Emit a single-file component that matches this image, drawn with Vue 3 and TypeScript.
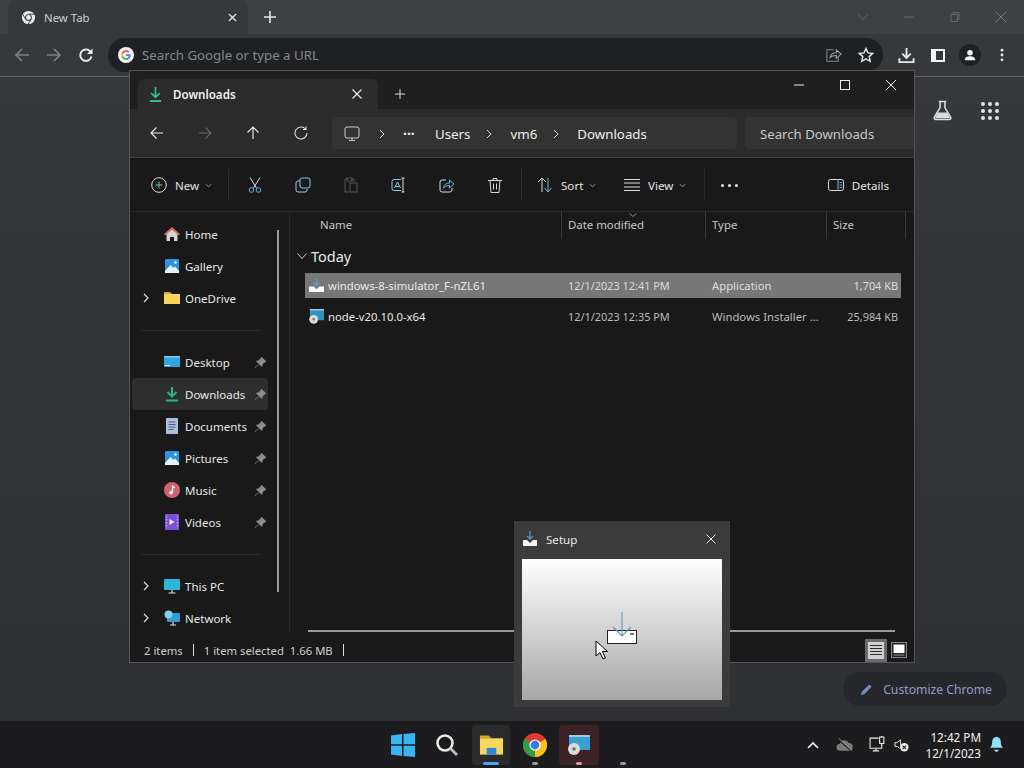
<script setup lang="ts">
const toolIcons = ['cut', 'copy', 'paste', 'rename', 'share', 'delete']

const navTop = [
  { name: 'Home', icon: 'home' },
  { name: 'Gallery', icon: 'gallery' },
  { name: 'OneDrive', icon: 'folder', arrow: true },
]
const navPinned = [
  { name: 'Desktop', icon: 'desktop' },
  { name: 'Downloads', icon: 'download', active: true },
  { name: 'Documents', icon: 'documents' },
  { name: 'Pictures', icon: 'gallery' },
  { name: 'Music', icon: 'music' },
  { name: 'Videos', icon: 'videos' },
]
const navBottom = [
  { name: 'This PC', icon: 'pc', arrow: true },
  { name: 'Network', icon: 'network', arrow: true },
]

const columns = [
  { name: 'Name', width: 257 },
  { name: 'Date modified', width: 144 },
  { name: 'Type', width: 121 },
  { name: 'Size', width: 79 },
]

const files = [
  { name: 'windows-8-simulator_F-nZL61', date: '12/1/2023 12:41 PM', type: 'Application', size: '1,704 KB', icon: 'setup', selected: true },
  { name: 'node-v20.10.0-x64', date: '12/1/2023 12:35 PM', type: 'Windows Installer ...', size: '25,984 KB', icon: 'msi', selected: false },
]
</script>

<template>
  <div class="screen">
    <div class="tabstrip">
      <div class="ctab">
        <svg class="cfav" viewBox="0 0 16 16">
          <circle cx="8" cy="8" r="7" fill="#e8eaed" />
          <circle cx="8" cy="8" r="3.6" fill="#3a3c3f" />
          <circle cx="8" cy="8" r="2.6" fill="#e8eaed" />
          <path d="M8 4.4h6.4M5 10l-3-5.5M10.8 10.2 7.6 15" stroke="#3a3c3f" stroke-width="1" fill="none" />
        </svg>
        <span class="ctab-title">New Tab</span>
        <svg class="ctab-x" viewBox="0 0 10 10"><path d="M1 1l8 8M9 1l-8 8" stroke="#dfe1e5" stroke-width="1.5" /></svg>
      </div>
      <svg class="cnew" viewBox="0 0 12 12"><path d="M6 0v12M0 6h12" stroke="#e3e5e8" stroke-width="1.6" /></svg>
      <div class="wctl">
        <svg viewBox="0 0 14 14" class="wc-chev"><path d="M2 4l5 6 5-6" stroke="#5f6366" fill="none" stroke-width="1" /></svg>
        <svg viewBox="0 0 14 14"><path d="M2 7h10" stroke="#65686b" stroke-width="1" /></svg>
        <svg viewBox="0 0 14 14"><path d="M3 4.5h6.5v7H3zM5 4.5V2.5h6v7H9.500" stroke="#65686b" fill="none" /></svg>
        <svg viewBox="0 0 14 14"><path d="M1.500 1.500l11 11M12.500 1.500l-11 11" stroke="#75787b" /></svg>
      </div>
    </div>

    <div class="ctoolbar">
      <svg class="cbtn" viewBox="0 0 16 16"><path d="M15 8H2M8 2 2 8l6 6" stroke="#7e8184" stroke-width="1.7" fill="none" /></svg>
      <svg class="cbtn" viewBox="0 0 16 16"><path d="M1 8h13M8 2l6 6-6 6" stroke="#7e8184" stroke-width="1.7" fill="none" /></svg>
      <svg class="cbtn" viewBox="0 0 16 16"><path d="M13.500 9.500a5.700 5.700 0 1 1-1.300-5.200" stroke="#eceef0" stroke-width="1.900" fill="none" /><path d="M14.500 1.500v5.400H9.100z" fill="#eceef0" /></svg>
      <div class="omnibox">
        <svg class="gicon" viewBox="0 0 16 16">
          <circle cx="8" cy="8" r="8" fill="#f3f3f3" />
          <path d="M8 3.200a4.800 4.800 0 0 1 3.300 1.300l-1.200 1.200A3.100 3.100 0 0 0 5 7l-1.400-1.100A4.800 4.800 0 0 1 8 3.200z" fill="#ea4335" />
          <path d="M3.600 5.900 5 7a3 3 0 0 0 0 2l-1.400 1.100a4.800 4.800 0 0 1 0-4.200z" fill="#fbbc05" />
          <path d="M3.600 10.100 5 9a3.100 3.100 0 0 0 4.800 1.600l1.300 1.100A4.800 4.800 0 0 1 3.600 10.100z" fill="#34a853" />
          <path d="M8 7.200h4.700a4.800 4.800 0 0 1-1.600 4.500L9.800 10.600c.5-.4.800-.8.900-1.500H8z" fill="#4285f4" />
        </svg>
        <span class="omni-text">Search Google or type a URL</span>
        <svg class="omni-share" viewBox="0 0 18 18"><path d="M9 3H2v12h12v-4" stroke="#85888b" fill="none" stroke-width="1.100" /><path d="M5.500 11c.5-3 3-5 6.500-5V3l5 4.500L12 12V9c-3 0-5 .5-6.500 2z" stroke="#a4a7aa" fill="none" stroke-width="1.100" /></svg>
        <svg class="omni-star" viewBox="0 0 16 16"><path d="M8 1.500l2 4.400 4.700.5-3.500 3.200 1 4.700L8 11.900l-4.200 2.400 1-4.700L1.300 6.400 6 5.900z" stroke="#dcdee1" stroke-width="1.500" fill="none" /></svg>
      </div>
      <div class="ctools">
        <svg class="dl" viewBox="0 0 18 18"><path d="M9 1v10M4.500 7 9 11.500 13.500 7" stroke="#e8eaed" stroke-width="2" fill="none" /><path d="M1.500 12v4h15v-4" stroke="#e8eaed" stroke-width="2" fill="none" /></svg>
        <div class="sidep"><i></i></div>
        <div class="avatar">
          <svg viewBox="0 0 16 16"><circle cx="8" cy="5.500" r="3.200" fill="#f1f3f4" /><path d="M2 14c0-3.500 3-4.500 6-4.500s6 1 6 4.500z" fill="#f1f3f4" /></svg>
        </div>
        <svg class="kebab" viewBox="0 0 4 16"><circle cx="2" cy="2.500" r="1.600" fill="#e8eaed" /><circle cx="2" cy="8" r="1.600" fill="#e8eaed" /><circle cx="2" cy="13.500" r="1.600" fill="#e8eaed" /></svg>
      </div>
    </div>

    <div class="ntp">
      <div class="ntp-top">
        <svg class="flask" viewBox="0 0 22 22"><path d="M7 1.500h8M8.500 1.500v6.500L2.500 18c-.8 1.500.2 2.500 1.500 2.500h14c1.300 0 2.300-1 1.500-2.500l-6-10V1.500" stroke="#dadce0" stroke-width="1.600" fill="none" /><path d="M6 13h10l3 6H3z" fill="#dadce0" /></svg>
        <div class="apps"><i v-for="n in 9" :key="n"></i></div>
      </div>
      <div class="customize">
        <svg viewBox="0 0 14 14"><path d="M1 13l1-3.500L10 1.500 12.500 4l-8 8z" fill="#8ab4f8" opacity=".75" /></svg>
        <span>Customize Chrome</span>
      </div>
    </div>

    <div class="taskbar">
      <div class="task-center">
        <div class="task-cell">
          <svg viewBox="0 0 24 24" class="win"><path d="M0 2.500 11 1v10.300H0zM12.500 1 24 0v11.300H12.500zM0 12.700h11V23L0 21.500zM12.500 12.700H24V24l-11.500-1z" fill="#38b6f4" /></svg>
        </div>
        <div class="task-cell">
          <svg viewBox="0 0 24 24" class="win"><circle cx="10" cy="10" r="7.500" stroke="#e8e8e8" stroke-width="2.600" fill="none" /><path d="M15.500 15.500 22 22" stroke="#b8b8b8" stroke-width="3" /></svg>
        </div>
        <div class="task-cell lit">
          <svg viewBox="0 0 26 24" class="win folder"><path d="M1 2h9l3 3H1z" fill="#d9a72a" /><path d="M1 5h24v17H1z" fill="#fad65e" /><path d="M8 15h10v7H8z" fill="#2b88d8" /></svg>
          <b class="pip wide"></b>
        </div>
        <div class="task-cell">
          <svg viewBox="0 0 24 24" class="win">
            <circle cx="12" cy="12" r="12" fill="#dd3a2e" />
            <path d="M12 12 22.400 6A12 12 0 0 1 12 24z" fill="#f9c31c" />
            <path d="M12 12 12 24A12 12 0 0 1 1.600 6z" fill="#2f9e49" />
            <circle cx="12" cy="12" r="5.600" fill="#fff" /><circle cx="12" cy="12" r="4.400" fill="#3b78e7" />
          </svg>
          <b class="pip"></b>
        </div>
        <div class="task-cell red">
          <svg viewBox="0 0 24 22" class="win"><rect x="2" y="1" width="21" height="15" fill="#3aa0d0" /><rect x="2" y="1" width="21" height="2" fill="#9ccbe2" /><circle cx="7" cy="15" r="6" fill="#d9dcdf" /><circle cx="7" cy="15" r="1.800" fill="#6d7175" /></svg>
          <b class="pip rose"></b>
        </div>
        <div class="task-cell"><b class="pip"></b></div>
      </div>
      <div class="tray">
        <svg class="t-chev" viewBox="0 0 12 8"><path d="M1 7l5-5 5 5" stroke="#f0f0f0" stroke-width="1.600" fill="none" /></svg>
        <svg class="t-cloud" viewBox="0 0 18 14"><path d="M4 13a3.500 3.500 0 0 1 0-7 5 5 0 0 1 9.500-1 4 4 0 0 1 .5 8z" fill="#7c7c7c" /><path d="M2 1l14 12" stroke="#222" stroke-width="1.500" /><path d="M3 0l14 13" stroke="#9a9a9a" /></svg>
        <svg class="t-net" viewBox="0 0 16 16"><path d="M9 2H1v9.500h11V8M3.500 14h6M6.500 11.500V14" stroke="#f0f0f0" fill="none" /><rect x="10" y="1" width="4" height="6" stroke="#f0f0f0" fill="none" /><path d="M12 0v1M12 7v2" stroke="#f0f0f0" /></svg>
        <svg class="t-vol" viewBox="0 0 16 16"><path d="M1 6h2.500L7 3v6" stroke="#f0f0f0" fill="none" /><path d="M1 6v4h2.500L6 12" stroke="#f0f0f0" fill="none" /><circle cx="11" cy="11" r="4.500" fill="#f0f0f0" /><path d="M9.200 9.200l3.600 3.600M12.800 9.200l-3.600 3.600" stroke="#222" stroke-width="1.200" /></svg>
        <div class="clock"><span>12:42 PM</span><span>12/1/2023</span></div>
        <svg class="t-bell" viewBox="0 0 16 18"><path d="M8 1c3.200 0 4.600 2.500 4.600 5.500 0 3 1 4.500 2.400 6H1c1.400-1.500 2.400-3 2.400-6C3.400 3.500 4.800 1 8 1z" fill="#8fe0fa" /><path d="M5.500 14.500h5C10 16 9 16.700 8 16.700S6 16 5.500 14.500z" fill="#8fe0fa" /></svg>
      </div>
    </div>

    <section class="explorer">
      <header class="ex-title">
        <div class="ex-tab">
          <svg class="ex-tab-ic" viewBox="0 0 16 18"><path d="M8 1v11M3.500 7.500 8 12l4.500-4.500" stroke="#2ec4a0" stroke-width="1.700" fill="none" /><path d="M2 16h12" stroke="#2ec4a0" stroke-width="2" /></svg>
          <span>Downloads</span>
          <svg class="ex-tab-x" viewBox="0 0 10 10"><path d="M.5.500l9 9M9.500.500l-9 9" stroke="#f0f0f0" stroke-width="1.100" /></svg>
        </div>
        <svg class="ex-plus" viewBox="0 0 10 10"><path d="M5 0v10M0 5h10" stroke="#ddd" /></svg>
        <div class="ex-ctl">
          <span><svg viewBox="0 0 10 10"><path d="M0 5h10" stroke="#f0f0f0" /></svg></span>
          <span><svg viewBox="0 0 10 10"><rect x=".5" y=".5" width="9" height="9" stroke="#f0f0f0" fill="none" /></svg></span>
          <span><svg viewBox="0 0 10 10"><path d="M0 0l10 10M10 0 0 10" stroke="#f0f0f0" /></svg></span>
        </div>
      </header>

      <div class="ex-nav">
        <span class="nbtn"><svg viewBox="0 0 14 14"><path d="M13 7H1M6.500 1.500 1 7l5.500 5.500" stroke="#eee" fill="none" stroke-width="1.100" /></svg></span>
        <span class="nbtn"><svg viewBox="0 0 14 14"><path d="M1 7h12M7.500 1.500 13 7l-5.500 5.500" stroke="#666" fill="none" stroke-width="1.100" /></svg></span>
        <span class="nbtn"><svg viewBox="0 0 14 14"><path d="M7 13V1M1.500 6.500 7 1l5.500 5.500" stroke="#eee" fill="none" stroke-width="1.100" /></svg></span>
        <span class="nbtn"><svg viewBox="0 0 14 14"><path d="M11.500 3a6 6 0 1 0 1.500 4M12 .5V3.500H9" stroke="#ddd" fill="none" stroke-width="1.100" /></svg></span>
        <div class="crumbs">
          <svg class="crumb-pc" viewBox="0 0 16 16"><rect x="1" y="1" width="14" height="11" rx="2" stroke="#ccc" fill="none" /><path d="M5 14.500h6M8 12v2.500" stroke="#ccc" /></svg>
          <svg class="crumb-sep c1" viewBox="0 0 6 10"><path d="M1 1l4 4-4 4" stroke="#ddd" fill="none" /></svg>
          <span class="crumb-dots">···</span>
          <span class="crumb">Users</span>
          <svg class="crumb-sep" viewBox="0 0 6 10"><path d="M1 1l4 4-4 4" stroke="#ddd" fill="none" /></svg>
          <span class="crumb">vm6</span>
          <svg class="crumb-sep" viewBox="0 0 6 10"><path d="M1 1l4 4-4 4" stroke="#ddd" fill="none" /></svg>
          <span class="crumb">Downloads</span>
        </div>
        <div class="search">Search Downloads</div>
      </div>

      <div class="ex-tools">
        <div class="tool-new">
          <svg viewBox="0 0 16 16"><circle cx="8" cy="8" r="7.300" stroke="#ddd" fill="none" /><path d="M8 4.500v7M4.500 8h7" stroke="#6fc5c0" /></svg>
          <span>New</span>
          <svg class="tiny" viewBox="0 0 8 5"><path d="M1 1l3 3 3-3" stroke="#aaa" fill="none" /></svg>
        </div>
        <i class="tsep"></i>
        <div class="tool-icons">
          <span v-for="t in toolIcons" :key="t" class="tool-ic">
            <svg viewBox="0 0 16 16">
              <g v-if="t === 'cut'" fill="none">
                <path d="M3 .5l6.500 10.500M13 .5 6.500 11" stroke="#d8d8d8" />
                <circle cx="4.500" cy="13" r="2.300" stroke="#60b7d8" /><circle cx="11.500" cy="13" r="2.300" stroke="#60b7d8" />
              </g>
              <g v-else-if="t === 'copy'" fill="none">
                <rect x="5" y="1" width="10" height="10" rx="2" stroke="#8fcbe2" />
                <path d="M5 4H3a2 2 0 0 0-2 2v7a2 2 0 0 0 2 2h7a2 2 0 0 0 2-2v-1" stroke="#8fcbe2" />
              </g>
              <g v-else-if="t === 'paste'" fill="none">
                <path d="M5 2H2v13h4M8 2h3v3" stroke="#555" /><rect x="7" y="6" width="7" height="9" stroke="#555" /><rect x="4" y="1" width="5" height="3" stroke="#555" />
              </g>
              <g v-else-if="t === 'rename'" fill="none">
                <path d="M10 2.500H3a2 2 0 0 0-2 2v7a2 2 0 0 0 2 2h7" stroke="#8fcbe2" />
                <path d="M3.500 11 6.500 5l3 6M4.500 9.500h4" stroke="#8fcbe2" />
                <path d="M12 1v14M10.500 1h3M10.500 15h3" stroke="#ddd" />
              </g>
              <g v-else-if="t === 'share'" fill="none">
                <path d="M7 3H3a2 2 0 0 0-2 2v8a2 2 0 0 0 2 2h8a2 2 0 0 0 2-2v-2" stroke="#d8d8d8" />
                <path d="M4.500 11c.5-3.500 3-5 6-5V3l4.500 4-4.500 4V8.500c-2.500 0-4.500.5-6 2.500z" stroke="#65b9d8" />
              </g>
              <g v-else fill="none" stroke="#d8d8d8">
                <path d="M1 3.500h14M6 3.500V1.500h4v2M3 3.500l1 12h8l1-12M6.500 6.500v6M9.500 6.500v6" />
              </g>
            </svg>
          </span>
        </div>
        <i class="tsep"></i>
        <div class="tool-lab sort">
          <svg viewBox="0 0 16 16"><path d="M5 15V1M1 5l4-4 4 4" stroke="#ddd" fill="none" /><path d="M11 1v14M7.500 11l3.500 4 3.500-4" stroke="#68bcd8" fill="none" /></svg>
          <span>Sort</span>
          <svg class="tiny" viewBox="0 0 8 5"><path d="M1 1l3 3 3-3" stroke="#aaa" fill="none" /></svg>
        </div>
        <div class="tool-lab view">
          <svg viewBox="0 0 16 12"><path d="M0 .5h16M0 4h16M0 8h16M0 11.500h16" stroke="#ddd" fill="none" /></svg>
          <span>View</span>
          <svg class="tiny" viewBox="0 0 8 5"><path d="M1 1l3 3 3-3" stroke="#aaa" fill="none" /></svg>
        </div>
        <i class="tsep s3"></i>
        <span class="more"><i></i><i></i><i></i></span>
        <div class="details">
          <svg viewBox="0 0 16 12"><rect x=".5" y=".5" width="15" height="11" rx="2" stroke="#ddd" fill="none" /><path d="M10 .5v11M11.500 3.500h2.500M11.500 6h2.500M11.500 8.500h2.500" stroke="#68bcd8" /></svg>
          <span>Details</span>
        </div>
      </div>

      <div class="ex-body">
        <aside class="side">
          <div class="side-list">
            <template v-for="(group, gi) in [navTop, navPinned, navBottom]" :key="gi">
              <div v-if="gi > 0" class="side-rule"></div>
              <div v-for="item in group" :key="item.name" class="side-item" :class="{ active: item.active }">
                <svg v-if="item.arrow" class="side-arrow" viewBox="0 0 6 10"><path d="M1 1l4 4-4 4" stroke="#ddd" fill="none" stroke-width="1.200" /></svg>
                <svg class="side-ic" viewBox="0 0 16 16">
                  <g v-if="item.icon === 'home'">
                    <path d="M8 1 0 8l1 1.500L8 3.500l7 6L16 8z" fill="#d96b4a" /><path d="M2.500 8 8 3.500 13.500 8v7h-3.500v-4H6v4H2.500z" fill="#d9d4cf" />
                  </g>
                  <g v-else-if="item.icon === 'gallery'">
                    <rect x="1" y="1" width="14" height="14" rx="1" fill="#2c93de" /><path d="M1 13l5.500-6 3 3 1.500-1.500L15 13v2H1z" fill="#e6f3fb" /><circle cx="11.500" cy="4.500" r="1.200" fill="#fff" />
                  </g>
                  <g v-else-if="item.icon === 'folder'">
                    <path d="M0 2h6l2 2H0z" fill="#dda92d" /><path d="M0 4h16v10H0z" fill="#fad55b" />
                  </g>
                  <g v-else-if="item.icon === 'desktop'">
                    <rect x="0" y="2" width="16" height="11" fill="#2fa6e0" /><rect x="0" y="2" width="16" height="1.600" fill="#7cc8ea" /><path d="M1 11h5v1H1z" fill="#dff" />
                  </g>
                  <g v-else-if="item.icon === 'download'">
                    <path d="M8 1v9M3.500 6 8 10.500 12.500 6" stroke="#2bb58c" stroke-width="2" fill="none" /><path d="M2 14.500h12" stroke="#2bb58c" stroke-width="2" />
                  </g>
                  <g v-else-if="item.icon === 'documents'">
                    <rect x="2" y="0" width="12" height="16" rx="1" fill="#aebfe0" /><path d="M4.500 4h7M4.500 6.500h7M4.500 9h7M4.500 11.500h5" stroke="#4a5a80" />
                  </g>
                  <g v-else-if="item.icon === 'music'">
                    <circle cx="8" cy="8" r="8" fill="#d0626b" /><path d="M8.500 3.500v7" stroke="#fff" stroke-width="1.300" /><circle cx="7" cy="10.800" r="1.700" fill="#fff" /><path d="M8.500 3.500l2.500 1.500v1.500l-2.500-1" fill="#fff" />
                  </g>
                  <g v-else-if="item.icon === 'videos'">
                    <rect x="1" y="0" width="14" height="16" rx="1" fill="#7c4fd8" /><path d="M5.500 5v6l5-3z" fill="#f0e6ff" />
                    <path d="M2.500 2v12M13.500 2v12" stroke="#bda6ee" stroke-width="1.400" stroke-dasharray="1.500 1.500" />
                  </g>
                  <g v-else-if="item.icon === 'pc'">
                    <rect x="0" y="1" width="16" height="11" rx="1" fill="#2fb5d8" /><path d="M8 12v2.500M4.500 15h7" stroke="#ddd" stroke-width="1.200" />
                  </g>
                  <g v-else>
                    <rect x="3" y="3" width="13" height="9" rx="1" fill="#2c9fd0" /><circle cx="4.500" cy="4.500" r="4" fill="#7fd0e8" /><path d="M9 12v2.500M6 15h6" stroke="#ddd" stroke-width="1.200" />
                  </g>
                </svg>
                <span class="side-name">{{ item.name }}</span>
                <svg v-if="group === navPinned" class="side-pin" viewBox="0 0 12 12"><path d="M7 0l5 5-1.500.5L8 8l-.5 2.500L1.500 4.500 4 4l2.500-2.500zM3.500 8 0 12" fill="#8e8e8e" stroke="#8e8e8e" stroke-width=".7" /></svg>
              </div>
            </template>
          </div>
          <div class="side-bar"></div>
        </aside>

        <main class="list">
          <svg class="sort-caret" viewBox="0 0 8 4"><path d="M.5.500 4 3.500 7.500.500" stroke="#888" fill="none" /></svg>
          <div class="cols">
            <div v-for="c in columns" :key="c.name" class="col" :style="{ width: c.width + 'px' }">{{ c.name }}</div>
          </div>
          <div class="group">
            <svg viewBox="0 0 10 6"><path d="M.5.500 5 5.500 9.500.500" stroke="#ccc" fill="none" /></svg>
            <span>Today</span>
          </div>
          <div v-for="f in files" :key="f.name" class="file" :class="{ sel: f.selected }">
            <span class="fcell fname">
              <svg viewBox="0 0 16 16">
                <g v-if="f.icon === 'setup'">
                  <path d="M8 0v8M5 5l3 3 3-3" stroke="#5ea4c4" stroke-width="1.400" fill="none" /><path d="M0 9h5l3 3 3-3h5v6H0z" fill="#fff" />
                </g>
                <g v-else>
                  <rect x="1" y="0" width="15" height="12" fill="#3291bf" /><rect x="1" y="0" width="15" height="1.500" fill="#9ccbe2" /><circle cx="5" cy="11" r="4.700" fill="#d9dcdf" /><circle cx="5" cy="11" r="1.300" fill="#6d7175" />
                </g>
              </svg>
              <span>{{ f.name }}</span>
            </span>
            <span class="fcell fdate">{{ f.date }}</span>
            <span class="fcell ftype">{{ f.type }}</span>
            <span class="fcell fsize">{{ f.size }}</span>
          </div>
          <div class="hbar"></div>
        </main>
      </div>

      <footer class="status">
        <span>2 items</span><i></i><span>1 item selected&nbsp; 1.66 MB</span><i></i>
        <div class="view-btns">
          <span class="vb on"><svg viewBox="0 0 16 17"><rect width="16" height="17" fill="#cfcfcf" /><path d="M2 3.500h12M2 6.500h12M2 9.500h12M2 12.500h12" stroke="#2a2a2a" /></svg></span>
          <span class="vb"><svg viewBox="0 0 16 17"><rect x=".5" y=".5" width="15" height="15" fill="#222" stroke="#888" /><rect x="2.500" y="2.500" width="11" height="8.500" fill="#fff" /><path d="M2.500 13h11" stroke="#999" /></svg></span>
        </div>
      </footer>
    </section>

    <section class="setup">
      <header class="setup-title">
        <svg viewBox="0 0 16 16"><path d="M8 0v8M5 5l3 3 3-3" stroke="#5e94b4" stroke-width="1.300" fill="none" /><path d="M1 9h4l3 3 3-3h4v6H1z" fill="#f4f4f4" /></svg>
        <span>Setup</span>
        <svg class="setup-x" viewBox="0 0 10 10"><path d="M.5.500l9 9M9.500.500l-9 9" stroke="#eee" /></svg>
      </header>
      <div class="setup-body">
        <svg class="setup-art" viewBox="0 0 32 34">
          <rect x="1.500" y="19.500" width="29" height="13" fill="#fff" stroke="#222" />
          <rect x="24" y="22" width="4" height="2" fill="#777" />
          <path d="M16 1v24M7 16l9 9 9-9" stroke="#5e99b5" stroke-width="1.100" fill="none" />
        </svg>
        <svg class="cursor" viewBox="0 0 13 20"><path d="M1 1v15l4-3.500 3 6.500 2.500-1-3-6.500H12.500z" fill="#fff" stroke="#000" /></svg>
      </div>
    </section>
  </div>
</template>

<style>
html, body { margin: 0; background: #2f3134; }
</style>

<style scoped>
.screen {
  position: relative;
  width: 1024px;
  height: 768px;
  overflow: hidden;
  display: flex;
  flex-direction: column;
  font-family: "Noto Sans", "Open Sans", sans-serif;
  font-size: 11.600px;
  color: #e4e4e4;
  background: #35373a;
}
svg { display: block; flex: none; }

.tabstrip {
  height: 34px;
  flex: none;
  display: flex;
  align-items: center;
  padding-left: 8px;
  background: #3e4144;
  box-sizing: border-box;
}
.ctab {
  width: 240px;
  height: 34px;
  display: flex;
  align-items: center;
  padding: 0 11px 0 13px;
  box-sizing: border-box;
  background: #36383b;
  border-radius: 8px 8px 0 0;
}
.cfav { width: 15px; height: 15px; margin-right: 8px; }
.ctab-title { color: #cdd0d4; flex: 1; font-size: 11.400px; }
.ctab-x { width: 9px; height: 9px; }
.cnew { width: 12px; height: 12px; margin-left: 16px; }
.wctl { margin-left: auto; display: flex; align-items: center; padding-right: 16px; }
.wctl svg { width: 14px; height: 14px; margin: 0 0 0 32px; }

.ctoolbar {
  height: 43px;
  flex: none;
  display: flex;
  align-items: center;
  padding-left: 14px;
  box-sizing: border-box;
  background: #36383b;
  border-bottom: 1px solid #5c5e61;
}
.cbtn { width: 16px; height: 16px; margin-right: 16px; }
.omnibox {
  width: 775px;
  height: 34px;
  margin-left: -2px;
  display: flex;
  align-items: center;
  padding: 0 9px 0 10px;
  box-sizing: border-box;
  border-radius: 17px;
  background: #1f2023;
}
.gicon { width: 16px; height: 16px; margin-right: 8px; }
.omni-text { color: #85888c; font-size: 13.250px; flex: 1; }
.omni-share { width: 17px; height: 17px; margin-right: 16px; }
.omni-star { width: 16px; height: 16px; margin-right: 0; }
.ctools { display: flex; align-items: center; margin-left: 15px; }
.dl { width: 17px; height: 17px; margin-right: 16px; }
.sidep { width: 14px; height: 13px; background: #f1f3f4; display: flex; justify-content: flex-end; margin-right: 14px; }
.sidep i { width: 7px; height: 9px; margin: 2px 2px 2px 0; background: #36383b; }
.avatar { width: 22px; height: 22px; border-radius: 50%; background: #1f2023; display: flex; align-items: center; justify-content: center; margin-right: 19px; }
.avatar svg { width: 14px; height: 14px; }
.kebab { width: 4px; height: 14px; }

.ntp {
  flex: 1;
  min-height: 0;
  display: flex;
  flex-direction: column;
  padding: 23px 17px 15px 0;
  background: linear-gradient(#36383b, #2e3034);
}
.ntp-top { display: flex; justify-content: flex-end; align-items: center; gap: 28px; }
.flask { width: 21px; height: 21px; }
.apps { display: grid; grid-template-columns: repeat(3, 4px); gap: 3px; padding-right: 8px; }
.apps i { width: 4px; height: 4px; border-radius: 50%; background: #e2e4e7; }
.customize {
  margin-top: auto;
  align-self: flex-end;
  height: 34px;
  padding: 0 15px 0 17px;
  display: flex;
  align-items: center;
  gap: 10px;
  border-radius: 17px;
  background: #25272b;
  color: #8f9fc4;
  font-size: 12.200px;
}
.customize svg { width: 13px; height: 13px; }

.taskbar {
  position: relative;
  height: 47px;
  flex: none;
  background: #1c1c1e;
  display: flex;
  align-items: center;
  justify-content: center;
  box-sizing: border-box;
  padding-left: 2px;
}
.task-center { display: flex; }
.task-cell {
  position: relative;
  width: 44px;
  height: 40px;
  display: flex;
  align-items: center;
  justify-content: center;
  border-radius: 4px;
}
.win { width: 24px; height: 24px; }
.folder { width: 25px; }
.lit { background: #2b2b2c; margin: 0 3px; width: 38px; }
.red { background: #3c2225; margin: 0 2px; width: 40px; }
.pip { position: absolute; bottom: 0; left: 50%; width: 6px; height: 3px; margin-left: -3px; border-radius: 2px; background: #9a9a9a; }
.pip.wide { width: 16px; margin-left: -8px; background: #4aa8f0; }
.pip.rose { background: #e89a9a; }
.tray { position: absolute; right: 0; top: 0; height: 100%; display: flex; align-items: center; }
.t-chev { width: 12px; height: 8px; margin-right: 17px; }
.t-cloud { width: 17px; height: 14px; margin-right: 16px; }
.t-net { width: 17px; height: 17px; margin-right: 8px; }
.t-vol { width: 15px; height: 15px; margin-right: 17px; }
.clock { display: flex; flex-direction: column; align-items: flex-end; line-height: 16px; font-size: 11.700px; color: #f2f2f2; margin-right: 8px; }
.t-bell { width: 15px; height: 17px; margin-right: 20px; }

.explorer {
  position: absolute;
  left: 130px;
  top: 71px;
  width: 784px;
  height: 591px;
  display: flex;
  flex-direction: column;
  background: #191919;
  outline: 1px solid #555;
  overflow: hidden;
}
.ex-title { height: 38px; flex: none; background: #1f1f1f; display: flex; align-items: flex-end; padding-left: 8px; position: relative; box-sizing: border-box; }
.ex-tab { width: 240px; height: 30px; background: #2b2b2b; border-radius: 6px 6px 0 0; display: flex; align-items: center; padding: 0 16px 0 10px; box-sizing: border-box; font-weight: 600; color: #f0f0f0; }
.ex-tab-ic { width: 15px; height: 17px; margin-right: 10px; }
.ex-tab span { flex: 1; }
.ex-tab-x { width: 10px; height: 10px; }
.ex-plus { width: 10px; height: 10px; margin: 0 0 10px 17px; }
.ex-ctl { position: absolute; top: 0; right: 0; display: flex; }
.ex-ctl span { width: 46px; height: 28px; display: flex; align-items: center; justify-content: center; }
.ex-ctl svg { width: 10px; height: 10px; }

.ex-nav { height: 49px; flex: none; background: #2b2b2b; display: flex; align-items: center; padding-left: 3px; box-sizing: border-box; border-bottom: 1px solid #3f3f3f; }
.nbtn { width: 48px; display: flex; justify-content: center; }
.nbtn svg { width: 14px; height: 14px; }
.crumbs { width: 405px; height: 32px; margin-left: 7px; background: #333; border-radius: 4px; display: flex; align-items: center; padding: 1px 0 0 12px; box-sizing: border-box; font-size: 13.300px; color: #eee; }
.crumb-pc { width: 16px; height: 16px; margin-right: 19px; }
.crumb-sep { width: 6px; height: 10px; margin: 0 18px 0 16px; }
.crumb-sep.c1 { margin: 0 18px 0 0; }
.crumb-dots { width: 32px; font-weight: 700; font-size: 14px; }
.search { flex: 1; height: 32px; margin-left: 8px; background: #333; border-radius: 4px 0 0 4px; display: flex; align-items: center; padding: 1px 0 0 15px; box-sizing: border-box; color: #c8c8c8; font-size: 13.200px; }

.ex-tools { height: 54px; flex: none; display: flex; align-items: center; padding: 1px 0 0 21px; background: #191919; border-bottom: 1px solid #2a2a2a; box-sizing: border-box; }
.ex-tools > .tool-new { display: flex; align-items: center; width: 77px; }
.tool-new svg:first-child { width: 16px; height: 16px; margin-right: 8px; }
.tiny { width: 7px; height: 5px; margin-left: 6px; }
.tsep { width: 1px; height: 32px; background: #2c2c2c; flex: none; }
.tool-icons { display: flex; padding: 0 2px; }
.tool-ic { width: 48px; display: flex; justify-content: center; }
.tool-ic svg { width: 16px; height: 16px; }
.tool-lab { display: flex; align-items: center; }
.tool-lab svg:first-child { width: 16px; height: 16px; margin-right: 8px; }
.sort { margin-left: 15px; width: 87px; }
.view { width: 80px; }
.more { margin-left: 16px; width: 17px; display: flex; justify-content: space-between; }
.more i { width: 3px; height: 3px; border-radius: 50%; background: #eee; }
.details { margin-left: auto; margin-right: 25px; display: flex; align-items: center; gap: 8px; }
.details svg { width: 16px; height: 12px; }

.ex-body { flex: 1; min-height: 0; display: flex; }
.side { width: 159px; flex: none; position: relative; border-right: 1px solid #272727; box-sizing: content-box; overflow: hidden; }
.side-list { padding: 6px 0 0 2px; display: flex; flex-direction: column; }
.side-item { position: relative; width: 136px; height: 32px; flex: none; display: flex; align-items: center; box-sizing: border-box; padding-left: 32px; border-radius: 4px; }
.side-item.active { background: #2e2e2e; }
.side-arrow { position: absolute; left: 11px; top: 11px; width: 6px; height: 10px; }
.side-ic { width: 16px; height: 16px; margin-right: 5px; }
.side-name { flex: 1; color: #e8e8e8; font-size: 11.500px; }
.side-pin { width: 11px; height: 11px; margin-right: 2px; }
.side-rule { width: 120px; height: 1px; background: #2c2c2c; margin: 16px 0 15px 9px; }
.side-bar { position: absolute; left: 147px; top: 18px; width: 2px; height: 362px; background: #9a9a9a; }

.list { position: relative; flex: 1; min-width: 0; }
.sort-caret { position: absolute; left: 339px; top: 1px; width: 8px; height: 4px; }
.cols { display: flex; height: 27px; padding-left: 15px; }
.col { box-sizing: border-box; padding-left: 15px; line-height: 25px; color: #c8c8c8; border-right: 1px solid #3a3a3a; font-size: 11.400px; }
.col:not(:first-child) { padding-left: 6px; }
.group { display: flex; align-items: center; height: 34px; padding-left: 7px; font-size: 14.500px; color: #e8e8e8; }
.group svg { width: 10px; height: 6px; margin-right: 4px; }
.file { display: flex; align-items: center; height: 25px; width: 596px; margin: 0 0 6px 15px; color: #bbb; white-space: nowrap; }
.file.sel { background: #777; color: #dcdcdc; }
.fcell { display: flex; align-items: center; }
.fname { width: 263px; padding-left: 4px; box-sizing: border-box; color: #e8e8e8; gap: 4px; font-size: 11.300px; }
.fname svg { width: 15px; height: 15px; }
.fdate { width: 144px; font-size: 10.900px; }
.ftype { width: 113px; font-size: 11.300px; }
.fsize { width: 73px; justify-content: flex-end; font-size: 10.900px; }
.hbar { position: absolute; left: 18px; right: 19px; bottom: 0; height: 2px; background: #9a9a9a; }

.status { height: 30px; flex: none; display: flex; align-items: center; padding: 6px 0 0 14px; color: #cfcfcf; font-size: 11.300px; box-sizing: border-box; position: relative; }
.status i { width: 1px; height: 12px; background: #ddd; margin: 0 10px; }
.view-btns { position: absolute; right: 7px; top: 7px; display: flex; align-items: center; }
.vb { width: 16px; height: 23px; display: flex; align-items: center; justify-content: center; }
.vb.on { width: 22px; background: #6b6b6b; margin-right: 4px; }
.vb svg { width: 16px; height: 17px; }

.setup { position: absolute; left: 514px; top: 521px; width: 216px; height: 186px; background: #3b3b3c; display: flex; flex-direction: column; padding: 0 8px 7px; box-sizing: border-box; }
.setup-title { height: 38px; flex: none; display: flex; align-items: center; color: #e8e8e8; font-size: 11.600px; padding-bottom: 2px; box-sizing: border-box; }
.setup-title svg:first-child { width: 16px; height: 16px; margin: 0 8px 0 0; }
.setup-title span { flex: 1; }
.setup-x { width: 10px; height: 10px; margin-right: 6px; }
.setup-body { position: relative; flex: 1; background: linear-gradient(#fff, #a7a7a7); display: flex; align-items: center; justify-content: center; }
.setup-art { width: 32px; height: 34px; margin-top: -4px; }
.cursor { position: absolute; left: 73px; top: 81px; width: 13px; height: 20px; }
</style>
